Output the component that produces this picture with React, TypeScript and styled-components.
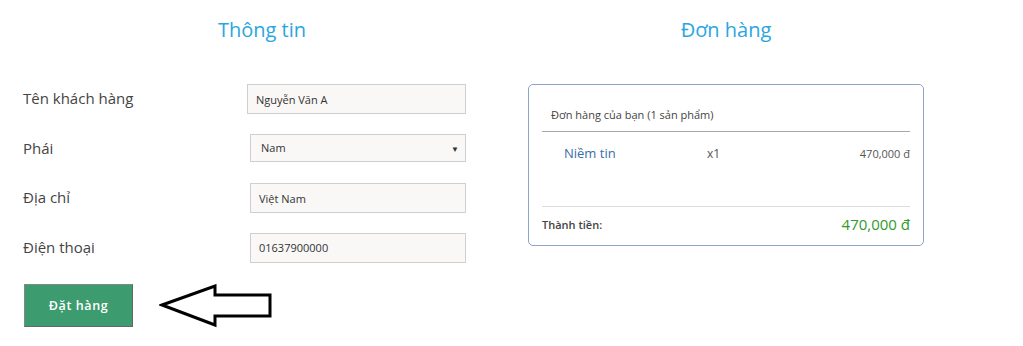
import React from "react";
import styled, { createGlobalStyle } from "styled-components";

const GlobalStyle = createGlobalStyle`
    body {
        margin: 0;
        background: #ffffff;
        font-family: "Open Sans", "Noto Sans", sans-serif;
        color: #444;
    }
`;

const Page = styled.div`
    display: flex;
    gap: 4px;
    width: 1023px;
    height: 346px;
    overflow: hidden;
`;

const Column = styled.section<{ $width: number }>`
    width: ${(p) => p.$width}px;
    display: flex;
    flex-direction: column;
`;

const Title = styled.h2`
    margin: 18px 0 42px;
    font-size: 20px;
    line-height: 24px;
    font-weight: 400;
    color: #2aa6df;
    text-align: center;
`;

const Form = styled.div`
    display: grid;
    grid-template-columns: 227px 216px;
    grid-auto-rows: 30px;
    row-gap: 19.67px;
    padding-left: 23px;
    align-items: center;
`;

const Label = styled.label`
    font-size: 15px;
    color: #444;
    margin-top: -2px;
`;

const Field = styled.input<{ $shift?: number }>`
    box-sizing: border-box;
    width: ${(p) => 216 + (p.$shift ?? 0)}px;
    height: 30px;
    margin-left: ${(p) => -(p.$shift ?? 0)}px;
    padding: 0 8px;
    border: 1px solid #cfcfcf;
    background: #f9f8f6;
    font-family: "Open Sans", sans-serif;
    font-size: 11px;
    color: #333;
    outline: none;
`;

const SelectBox = styled.div`
    position: relative;
    align-self: start;
    box-sizing: border-box;
    width: 216px;
    height: 28px;
    padding: 0 10px;
    border: 1px solid #cfcfcf;
    background: #f9f8f6;
    display: flex;
    align-items: center;
    font-size: 11px;
    color: #333;
`;

const Caret = styled.span`
    position: absolute;
    right: 6px;
    top: 8px;
    font-size: 8px;
    color: #333;
`;

const ActionRow = styled.div`
    display: flex;
    align-items: center;
    gap: 26px;
    margin: 21px 0 0 24px;
`;

const OrderButton = styled.button`
    width: 109px;
    height: 43px;
    background: #3d9b70;
    border: 1px solid #7c8b84;
    border-right-color: #5f6a64;
    border-bottom-color: #5f6a64;
    color: #fff;
    font-family: "Open Sans", sans-serif;
    font-size: 12.5px;
    font-weight: 600;
    letter-spacing: 0.6px;
    cursor: pointer;
`;

const OrderCard = styled.div`
    box-sizing: border-box;
    width: 396px;
    border: 1px solid #8ea3c6;
    border-radius: 5px;
    padding: 0 13px 4px;
`;

const CardHeader = styled.div`
    height: 47px;
    display: flex;
    align-items: flex-end;
    padding: 0 0 9px 9px;
    box-sizing: border-box;
    border-bottom: 1px solid #a4a9b0;
    font-size: 11px;
    color: #444;
`;

const Items = styled.div`
    height: 74px;
`;

const ItemRow = styled.div`
    display: grid;
    grid-template-columns: 143px 1fr auto;
    align-items: center;
    height: 42px;
    padding-left: 22px;
`;

const ItemName = styled.span`
    font-size: 13px;
    color: #3a6ea5;
`;

const ItemQty = styled.span`
    font-size: 12px;
    color: #555;
`;

const ItemPrice = styled.span`
    font-size: 11px;
    color: #555;
`;

const CardFooter = styled.div`
    height: 34px;
    display: flex;
    align-items: center;
    justify-content: space-between;
    border-top: 1px solid #dcdcdc;
`;

const TotalLabel = styled.span`
    font-size: 11px;
    font-weight: 600;
    color: #444;
`;

const TotalValue = styled.span`
    font-size: 15px;
    color: #2e9a2e;
`;

const ArrowIcon = () => (
    <svg width="114" height="44" viewBox="0 0 114 44">
        <polygon
            points="3,21 56,2 56,11 111,11 111,32 56,32 56,41"
            fill="#fff"
            stroke="#000"
            strokeWidth="3"
            strokeLinejoin="miter"
        />
    </svg>
);

const App = () => {
    return (
        <>
            <GlobalStyle />
            <Page>
                <Column $width={524}>
                    <Title>Thông tin</Title>
                    <Form>
                        <Label>Tên khách hàng</Label>
                        <Field $shift={3} defaultValue="Nguyễn Văn A" />
                        <Label>Phái</Label>
                        <SelectBox>
                            Nam
                            <Caret>▼</Caret>
                        </SelectBox>
                        <Label>Địa chỉ</Label>
                        <Field defaultValue="Việt Nam" />
                        <Label>Điện thoại</Label>
                        <Field defaultValue="01637900000" />
                    </Form>
                    <ActionRow>
                        <OrderButton>Đặt hàng</OrderButton>
                        <ArrowIcon />
                    </ActionRow>
                </Column>
                <Column $width={396}>
                    <Title>Đơn hàng</Title>
                    <OrderCard>
                        <CardHeader>Đơn hàng của bạn (1 sản phẩm)</CardHeader>
                        <Items>
                            <ItemRow>
                                <ItemName>Niềm tin</ItemName>
                                <ItemQty>x1</ItemQty>
                                <ItemPrice>470,000 đ</ItemPrice>
                            </ItemRow>
                        </Items>
                        <CardFooter>
                            <TotalLabel>Thành tiền:</TotalLabel>
                            <TotalValue>470,000 đ</TotalValue>
                        </CardFooter>
                    </OrderCard>
                </Column>
            </Page>
        </>
    );
};

export default App;
